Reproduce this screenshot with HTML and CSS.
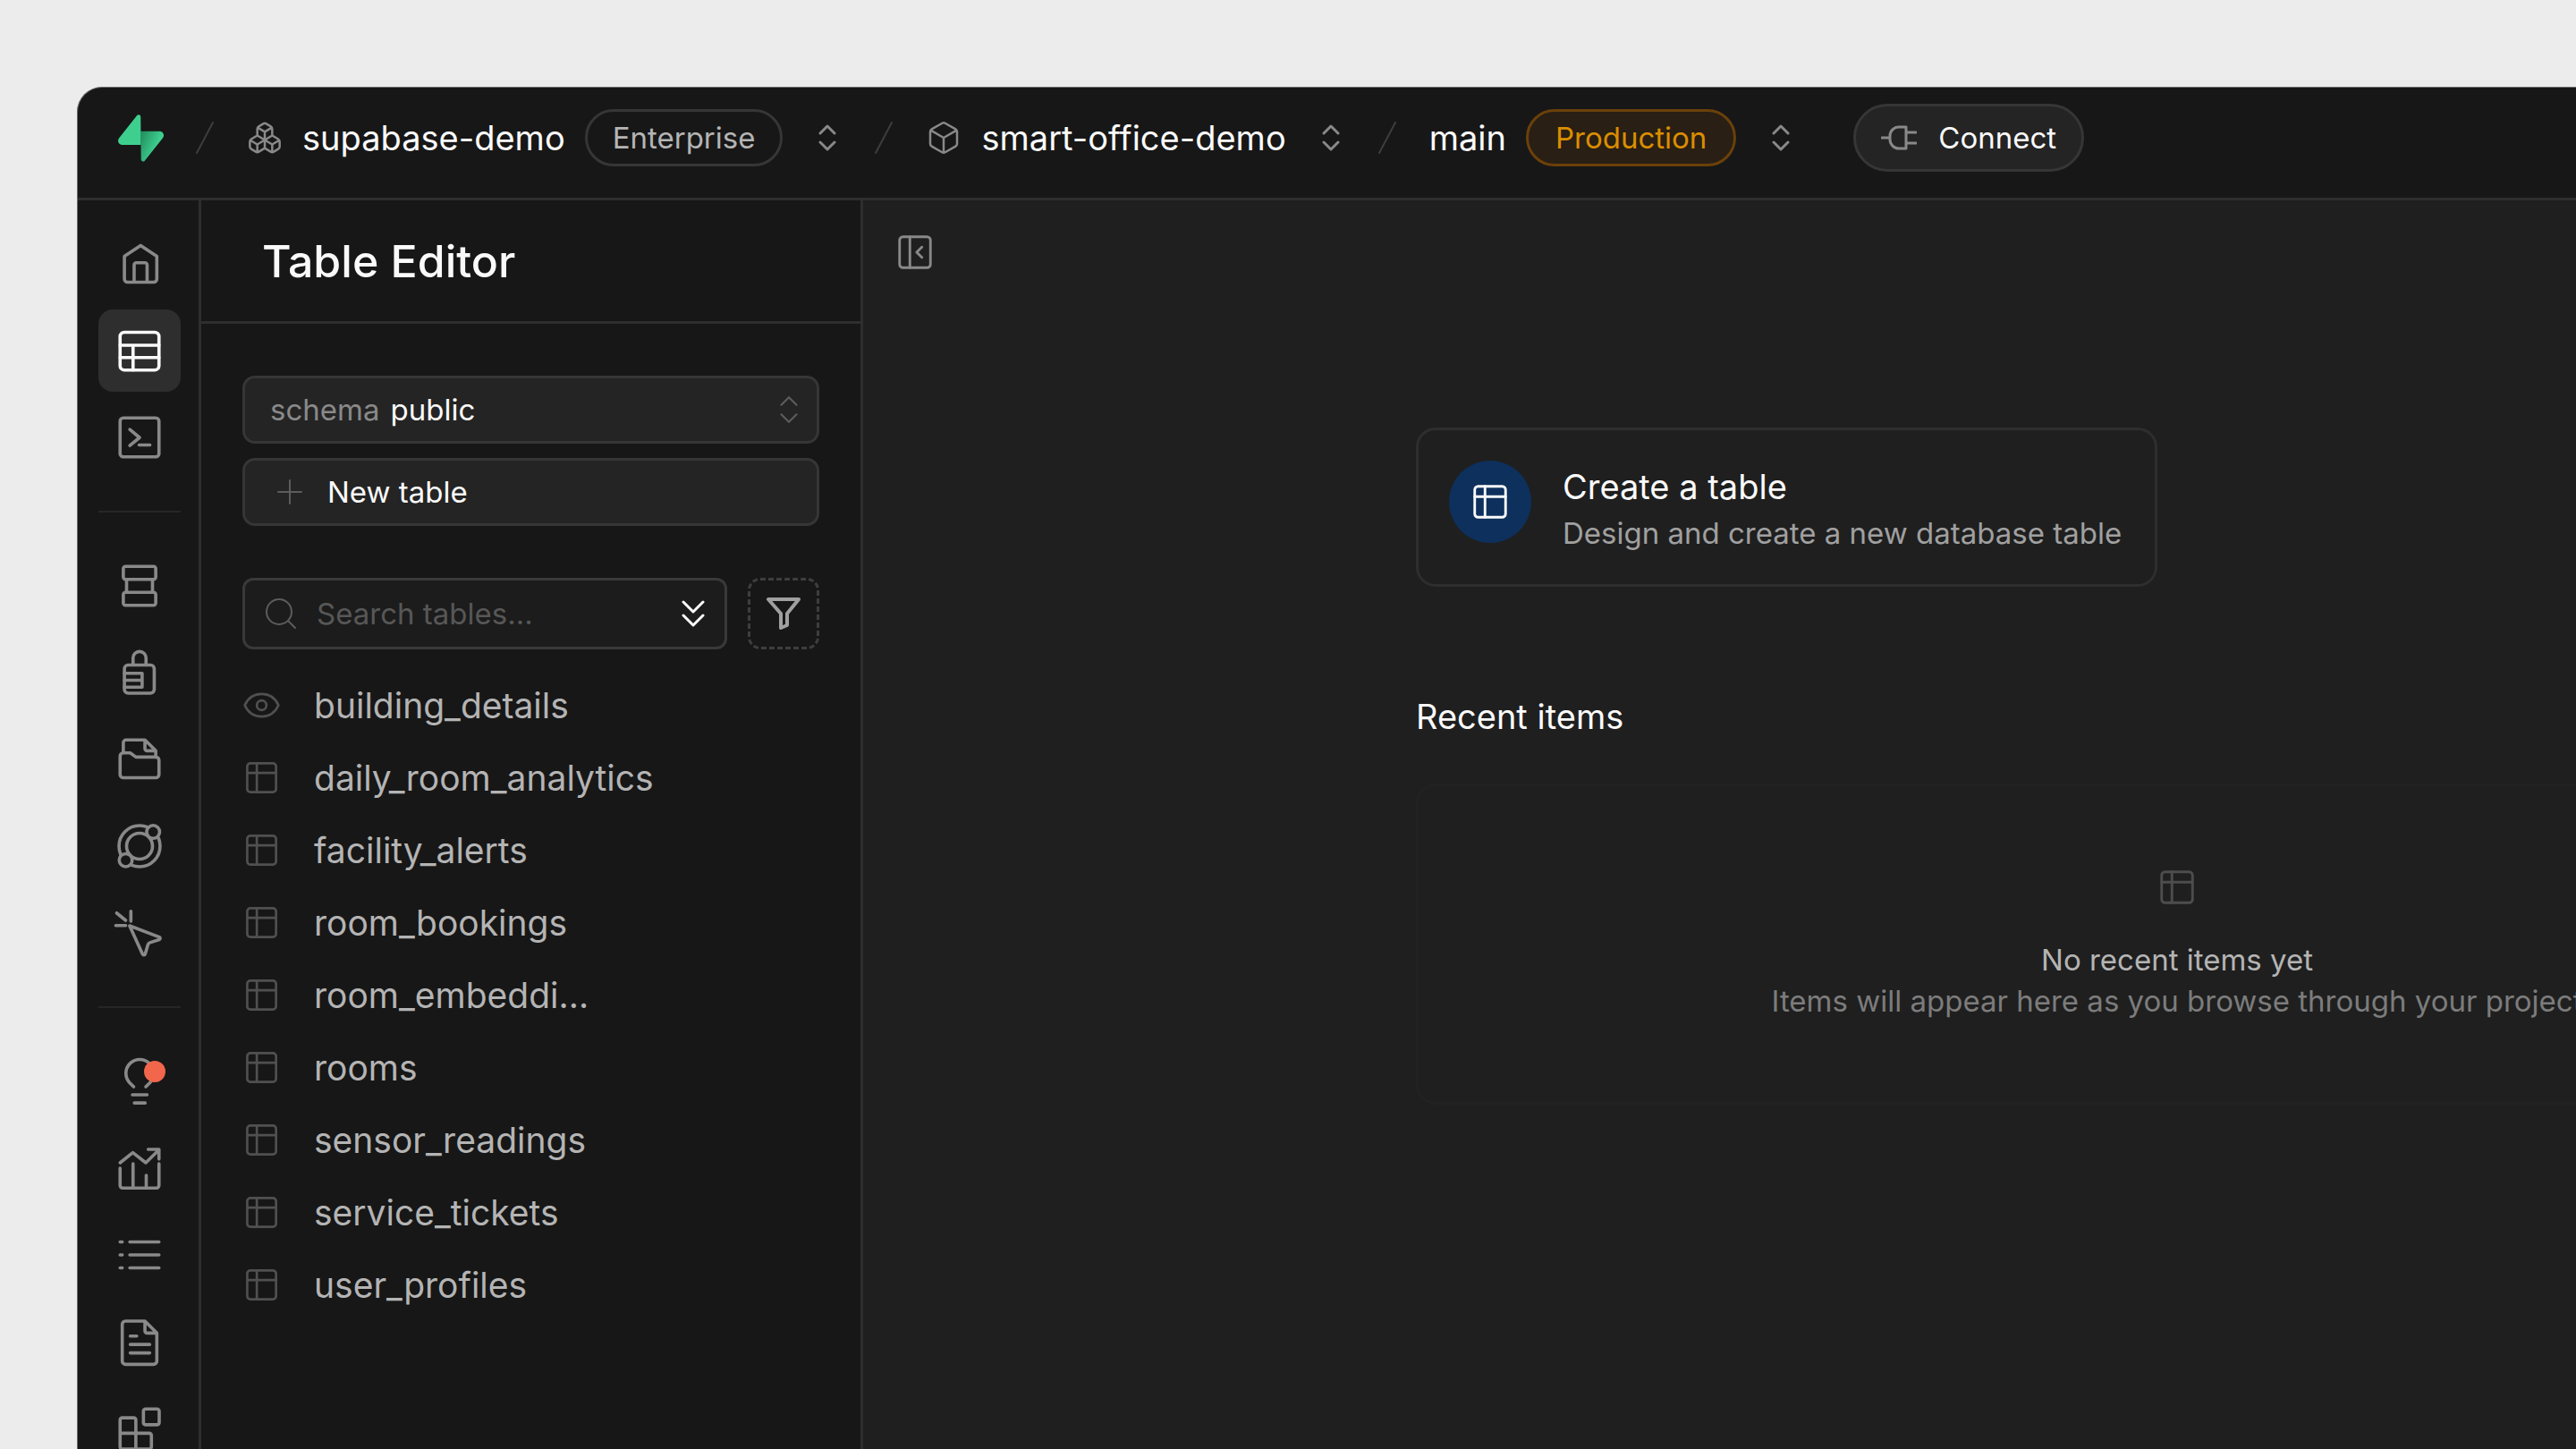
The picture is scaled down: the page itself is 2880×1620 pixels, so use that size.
FILE: index.html
```html
<!DOCTYPE html>
<html lang="en">
<head>
    <meta charset="utf-8">
    <title>Table Editor | Supabase</title>
    <link rel="stylesheet" href="styles.css">
</head>
<body>
    <!-- Icon sprite -->
    <svg class="sprite" aria-hidden="true">
        <symbol id="i-updown" viewBox="0 0 20 30"><path d="M2 10l8-8 8 8M2 20l8 8 8-8"/></symbol>
        <symbol id="i-slash" viewBox="0 0 20 36"><path d="M19 1L1 35"/></symbol>
        <symbol id="i-table" viewBox="0 0 24 24"><rect x="3" y="3" width="18" height="18" rx="2"/><path d="M3 9h18M9 3v18"/></symbol>
        <symbol id="i-box" viewBox="0 0 24 24"><path d="M21 8a2 2 0 0 0-1-1.73l-7-4a2 2 0 0 0-2 0l-7 4A2 2 0 0 0 3 8v8a2 2 0 0 0 1 1.73l7 4a2 2 0 0 0 2 0l7-4A2 2 0 0 0 21 16ZM3.3 7l8.7 5 8.7-5M12 22V12"/></symbol>
        <symbol id="i-boxes" viewBox="0 0 24 24"><path d="M2.97 12.92A2 2 0 0 0 2 14.63v3.24a2 2 0 0 0 .97 1.71l3 1.8a2 2 0 0 0 2.06 0L12 19v-5.5l-5-3-4.03 2.42ZM7 16.5l-4.74-2.85M7 16.5l5-3M7 16.5v5.17M12 13.5V19l3.97 2.38a2 2 0 0 0 2.06 0l3-1.8a2 2 0 0 0 .97-1.71v-3.24a2 2 0 0 0-.97-1.71L17 10.5l-5 3ZM17 16.5l-5-3M17 16.5l4.74-2.85M17 16.5v5.17M7.97 4.42A2 2 0 0 0 7 6.13v4.37l5 3 5-3V6.13a2 2 0 0 0-.97-1.71l-3-1.8a2 2 0 0 0-2.06 0l-3 1.8ZM12 8L7.26 5.15M12 8l4.74-2.85M12 13.5V8"/></symbol>
    </svg>

    <div class="app">
        <header class="topbar">
            <a class="logo" href="#" aria-label="Supabase">
                <svg viewBox="0 0 109 113">
                    <defs>
                        <linearGradient id="bolt" x1="54" y1="55" x2="94" y2="72" gradientUnits="userSpaceOnUse">
                            <stop stop-color="#249361"/>
                            <stop offset="1" stop-color="#3ecf8e"/>
                        </linearGradient>
                    </defs>
                    <path fill="url(#bolt)" d="M63.7 110.3c-2.9 3.6-8.7 1.6-8.7-3L54 40h45.2c8.2 0 12.8 9.5 7.7 15.9L63.7 110.3Z"/>
                    <path fill="#3ecf8e" d="M45.3 2.1c2.9-3.6 8.7-1.7 8.7 3l.5 67.2H9.8c-8.2 0-12.7-9.5-7.6-15.9L45.3 2.1Z"/>
                </svg>
            </a>
            <svg class="slash"><use href="#i-slash"/></svg>
            <div class="crumb">
                <svg class="crumb-icon"><use href="#i-boxes"/></svg>
                <a href="#">supabase-demo</a>
                <span class="badge">Enterprise</span>
                <button class="switch" aria-label="Switch organization"><svg><use href="#i-updown"/></svg></button>
            </div>
            <svg class="slash"><use href="#i-slash"/></svg>
            <div class="crumb">
                <svg class="crumb-icon"><use href="#i-box"/></svg>
                <a href="#">smart-office-demo</a>
                <button class="switch" aria-label="Switch project"><svg><use href="#i-updown"/></svg></button>
            </div>
            <svg class="slash"><use href="#i-slash"/></svg>
            <div class="crumb">
                <a href="#">main</a>
                <span class="badge badge-warning">Production</span>
                <button class="switch" aria-label="Switch branch"><svg><use href="#i-updown"/></svg></button>
            </div>
            <button class="connect">
                <svg viewBox="0 0 40 28"><path d="M1 14h9M28 8h11M28 20h11M28 2v24h-8a10 10 0 0 1-10-10v-4A10 10 0 0 1 20 2Z"/></svg>
                Connect
            </button>
        </header>

        <div class="body">
            <nav class="rail">
                <a href="#" aria-label="Home"><svg viewBox="0 0 24 24"><path d="M5 8.5l7.500-5 7.500 5v10.500a1.500 1.500 0 0 1-1.500 1.500h-12A1.500 1.500 0 0 1 5 19ZM9.500 20.500v-8a1 1 0 0 1 1-1h4a1 1 0 0 1 1 1v8"/></svg></a>
                <a href="#" class="active" aria-label="Table Editor"><svg viewBox="0 0 24 24"><rect x="3" y="3.500" width="18" height="17.500" rx="2"/><path d="M3 9.500h18M3 15.200h18M9 9.500V21"/></svg></a>
                <a href="#" aria-label="SQL Editor"><svg viewBox="0 0 24 24"><rect x="3" y="3" width="18" height="18" rx="1.500"/><path d="M7.500 8.300l4.500 3.800-4.500 3.700M11.800 15.500h5"/></svg></a>
                <hr>
                <a href="#" aria-label="Database"><svg viewBox="0 0 24 24"><rect x="4.500" y="3" width="15" height="6" rx="1"/><rect x="4.500" y="15" width="15" height="6" rx="1"/><path d="M6 9v6M18 9v6"/></svg></a>
                <a href="#" aria-label="Authentication"><svg viewBox="0 0 24 24"><rect x="5" y="8.500" width="13.800" height="13" rx="1.700"/><path d="M9 8.500V5.200a3 3 0 0 1 6 0v3.300M5 12.300h8.200v6.400H5M5 15.500h8"/></svg></a>
                <a href="#" aria-label="Storage"><svg viewBox="0 0 24 24"><path d="M4.500 9V4.300A1.300 1.300 0 0 1 5.800 3h8.700l5 5v2.500M14.500 3v4a1 1 0 0 0 1 1h4M3 10.500A1.500 1.500 0 0 1 4.500 9h3.200l2.600 1.900h9.200A1.500 1.500 0 0 1 21 12.400v6.600a1.500 1.500 0 0 1-1.500 1.500h-15A1.500 1.500 0 0 1 3 19Z"/></svg></a>
                <a href="#" aria-label="Edge Functions"><svg viewBox="0 0 24 24"><circle cx="12" cy="12" r="9.500"/><circle cx="12" cy="12" r="6"/><circle class="knob" cx="18.300" cy="5.400" r="3"/><circle class="knob" cx="5.600" cy="18.500" r="3"/></svg></a>
                <a href="#" aria-label="Realtime"><svg viewBox="0 0 24 24"><path d="M1.400 2.800l4.200 3.400M1 8.600h4.600M8 2v4.600M7.400 8.700l6 13.100c.3.600 1 .6 1.200 0l1.300-4.400a1.500 1.500 0 0 1 .9-.9l4.300-1.400c.6-.2.6-1 0-1.200Z"/></svg></a>
                <hr>
                <a href="#" aria-label="Advisors"><svg viewBox="0 0 24 24"><path d="M9.300 14.500l-1.900-1.900a6.400 6.400 0 1 1 9.400 0l-1.900 1.900M8.700 18.200h6.800M9.600 22h5"/></svg><span class="dot"></span></a>
                <a href="#" aria-label="Reports"><svg viewBox="0 0 24 24"><path d="M3 9.500l5.900-4.700 6 4.700L21 3.500M16 3.300h5v4.500M3 12v8a1.200 1.200 0 0 0 1.200 1.200h15.600A1.200 1.200 0 0 0 21 20V10M9 10v11M15.100 15.300V21"/></svg></a>
                <a href="#" aria-label="Logs"><svg viewBox="0 0 24 24"><path d="M3 6h1M3 12h1M3 18h1M7.500 6H21M7.500 12H21M7.500 18H21"/></svg></a>
                <a href="#" aria-label="API Docs"><svg viewBox="0 0 24 24"><path d="M14.500 2.500h-9A1.500 1.500 0 0 0 4 4v17a1.500 1.500 0 0 0 1.500 1.500h13A1.500 1.500 0 0 0 20 21V8ZM14.500 2.500V7a1 1 0 0 0 1 1H20M7.700 9.400h3M7.700 13.300h9M7.700 17.200h9"/></svg></a>
                <a href="#" aria-label="Integrations"><svg viewBox="0 0 24 24"><rect x="13.800" y="3" width="7.300" height="7.300" rx="1"/><path d="M10.300 21.500V8.100a1 1 0 0 0-1-1H4a1 1 0 0 0-1 1v12.400a1 1 0 0 0 1 1h12.500a1 1 0 0 0 1-1v-5.300a1 1 0 0 0-1-1H3"/></svg></a>
            </nav>

            <aside class="sidebar">
                <h1>Table Editor</h1>
                <div class="controls">
                    <button class="field">
                        <span class="muted">schema</span> public
                        <svg class="updown"><use href="#i-updown"/></svg>
                    </button>
                    <button class="field new-table">
                        <svg class="plus" viewBox="0 0 28 28"><path d="M14 1v26M1 14h26"/></svg>
                        New table
                    </button>
                </div>
                <div class="search-row">
                    <label class="search">
                        <svg class="search-icon" viewBox="0 0 36 36"><circle cx="16" cy="16" r="14"/><path d="M26 26l8 8"/></svg>
                        <input type="text" placeholder="Search tables..." aria-label="Search tables">
                        <svg class="sort" viewBox="0 0 26 32"><path d="M2 3l11 11L24 3M2 18l11 11 11-11"/></svg>
                    </label>
                    <button class="filter" aria-label="Filter">
                        <svg viewBox="0 0 38 36"><path d="M2 2h34L23 18v13l-7 3V18Z"/></svg>
                    </button>
                </div>
                <ul class="tables">
                    <li><a href="#"><svg viewBox="0 0 24 24"><path d="M1.500 12C3.500 7.500 7.500 5 12 5s8.500 2.500 10.500 7c-2 4.500-6 7-10.500 7S3.500 16.500 1.500 12Z"/><circle cx="12" cy="12" r="3"/></svg><span>building_details</span></a></li>
                    <li><a href="#"><svg><use href="#i-table"/></svg><span>daily_room_analytics</span></a></li>
                    <li><a href="#"><svg><use href="#i-table"/></svg><span>facility_alerts</span></a></li>
                    <li><a href="#"><svg><use href="#i-table"/></svg><span>room_bookings</span></a></li>
                    <li><a href="#"><svg><use href="#i-table"/></svg><span>room_embeddi…</span></a></li>
                    <li><a href="#"><svg><use href="#i-table"/></svg><span>rooms</span></a></li>
                    <li><a href="#"><svg><use href="#i-table"/></svg><span>sensor_readings</span></a></li>
                    <li><a href="#"><svg><use href="#i-table"/></svg><span>service_tickets</span></a></li>
                    <li><a href="#"><svg><use href="#i-table"/></svg><span>user_profiles</span></a></li>
                </ul>
            </aside>

            <main class="main">
                <button class="collapse" aria-label="Collapse sidebar">
                    <svg viewBox="0 0 24 24"><rect x="3" y="3" width="18" height="18" rx="2"/><path d="M9 3v18M16 15l-3-3 3-3"/></svg>
                </button>
                <div class="content">
                    <button class="card">
                        <span class="card-icon"><svg><use href="#i-table"/></svg></span>
                        <span class="card-text">
                            <strong>Create a table</strong>
                            <span>Design and create a new database table</span>
                        </span>
                    </button>
                    <h2>Recent items</h2>
                    <div class="recent">
                        <svg><use href="#i-table"/></svg>
                        <p class="recent-title">No recent items yet</p>
                        <p>Items will appear here as you browse through your project</p>
                    </div>
                </div>
            </main>
        </div>
    </div>
</body>
</html>
```
FILE: styles.css
```css
* {
    box-sizing: border-box;
}

body {
    margin: 0;
    height: 100vh;
    padding: 97px 0 0 86px;
    overflow: hidden;
    background: #ececec;
    color: #fafafa;
    font-family: Inter, "Liberation Sans", sans-serif;
    font-size: 33px;
}

svg {
    display: block;
    flex: none;
    fill: none;
    stroke: currentColor;
    stroke-linecap: round;
    stroke-linejoin: round;
}

a {
    color: inherit;
    text-decoration: none;
}

button, input {
    font: inherit;
    color: inherit;
    background: none;
    border: none;
    padding: 0;
    margin: 0;
}

button {
    display: flex;
    align-items: center;
    cursor: pointer;
}

.sprite {
    position: absolute;
    width: 0;
    height: 0;
}

.app {
    height: 100%;
    display: flex;
    flex-direction: column;
    overflow: hidden;
    background: #171717;
    border: 1px solid #6b6b6b;
    border-width: 1px 0 0 1px;
    border-top-left-radius: 28px;
}

/* Top bar */
.topbar {
    display: flex;
    align-items: center;
    gap: 25px;
    flex: none;
    height: 126px;
    padding: 0 45px 11px;
    border-bottom: 3px solid #2e2e2e;
    font-size: 38px;
}

.logo {
    margin-right: 11px;
}

.logo svg {
    width: 51px;
    height: 53px;
    stroke: none;
}

.slash {
    width: 20px;
    height: 36px;
    margin-right: 12px;
    color: #3d3d3d;
    stroke-width: 2;
}

.crumb {
    display: flex;
    align-items: center;
    gap: 22px;
}

.crumb-icon {
    width: 40px;
    height: 40px;
    color: #898989;
    stroke-width: 1.5;
}

.badge {
    display: flex;
    align-items: center;
    height: 64px;
    padding: 0 28px;
    border: 3px solid #363636;
    border-radius: 32px;
    color: #b4b4b4;
    font-size: 33px;
}

.badge-warning {
    padding: 0 30px;
    color: #db8e00;
    background: #291f14;
    border-color: #6b400a;
}

.switch {
    padding: 0 18px;
    color: #898989;
}

.switch svg {
    width: 20px;
    height: 30px;
    stroke-width: 3;
}

.connect {
    height: 76px;
    margin-left: 28px;
    padding: 0 28px;
    gap: 24px;
    background: #242424;
    border: 3px solid #363636;
    border-radius: 38px;
    font-size: 33px;
}

.connect svg {
    width: 40px;
    height: 28px;
    color: #898989;
    stroke-width: 3;
}

.body {
    display: flex;
    flex: 1;
    min-height: 0;
}

/* Icon rail */
.rail {
    flex: none;
    width: 138px;
    display: flex;
    flex-direction: column;
    align-items: center;
    gap: 5px;
    padding: 25px 0 0 2px;
    border-right: 3px solid #2e2e2e;
    color: #898989;
    overflow: hidden;
}

.rail a {
    position: relative;
    flex: none;
    display: flex;
    align-items: center;
    justify-content: center;
    width: 92px;
    height: 92px;
    border-radius: 16px;
}

.rail svg {
    width: 58px;
    height: 58px;
    stroke-width: 1.5;
}

.rail .active {
    background: #2e2e2e;
    color: #fafafa;
}

.rail hr {
    flex: none;
    width: 92px;
    height: 2px;
    margin: 31px 0;
    border: none;
    background: #262626;
}

.knob {
    fill: #171717;
}

.dot {
    position: absolute;
    top: 23px;
    right: 17px;
    width: 24px;
    height: 24px;
    border-radius: 50%;
    background: #f2664b;
}

/* Sidebar */
.sidebar {
    flex: none;
    width: 740px;
    border-right: 3px solid #2e2e2e;
}

.sidebar h1 {
    margin: 0;
    height: 138px;
    padding-left: 68px;
    border-bottom: 3px solid #2e2e2e;
    font-size: 50px;
    font-weight: 500;
    line-height: 136px;
}

.controls {
    display: flex;
    flex-direction: column;
    gap: 16px;
    padding: 58px 46px;
}

.field {
    height: 76px;
    padding: 0 20px 0 28px;
    gap: 12px;
    background: #242424;
    border: 3px solid #363636;
    border-radius: 14px;
}

.muted {
    color: #898989;
}

.updown {
    width: 22px;
    height: 32px;
    margin-left: auto;
    color: #5c5c5c;
    stroke-width: 2;
}

.new-table {
    gap: 28px;
    padding-left: 36px;
}

.plus {
    width: 28px;
    height: 28px;
    color: #5c5c5c;
    stroke-width: 2;
}

.search-row {
    display: flex;
    gap: 23px;
    padding: 0 46px;
}

.search {
    flex: 1;
    min-width: 0;
    display: flex;
    align-items: center;
    height: 80px;
    padding: 0 22px;
    border: 3px solid #393939;
    border-radius: 12px;
    background: #1c1c1c;
}

.search input {
    flex: 1;
    min-width: 0;
    margin: 0 22px;
    outline: none;
}

.search input::placeholder {
    color: #575757;
    opacity: 1;
}

.search-icon {
    width: 36px;
    height: 36px;
    color: #5c5c5c;
    stroke-width: 2;
}

.sort {
    width: 26px;
    height: 32px;
    stroke-width: 3;
}

.filter {
    justify-content: center;
    width: 80px;
    height: 80px;
    border: 3px dashed #3e3e3e;
    border-radius: 14px;
    color: #a0a0a0;
}

.filter svg {
    width: 38px;
    height: 36px;
    stroke-width: 4;
}

.tables {
    list-style: none;
    margin: 0;
    padding: 22px 46px;
    color: #b4b4b4;
    font-size: 39px;
}

.tables a {
    display: flex;
    align-items: center;
    gap: 37px;
    height: 81px;
}

.tables svg {
    width: 43px;
    height: 43px;
    color: #505050;
    stroke-width: 1.5;
}

/* Main area, runs off the right edge */
.main {
    flex: 1;
    min-width: 0;
    background: #1f1f1f;
    overflow: hidden;
}

.collapse {
    margin: 35px 0 0 35px;
    color: #898989;
}

.collapse svg {
    width: 46px;
    height: 46px;
    stroke-width: 1.5;
}

.content {
    padding: 173px 0 0 618px;
}

.card {
    align-items: flex-start;
    gap: 35px;
    width: 829px;
    height: 178px;
    padding: 34px;
    border: 3px solid #2e2e2e;
    border-radius: 22px;
    text-align: left;
}

.card-icon {
    flex: none;
    display: flex;
    align-items: center;
    justify-content: center;
    width: 92px;
    height: 92px;
    border-radius: 50%;
    background: #0e305c;
}

.card-icon svg {
    width: 46px;
    height: 46px;
    stroke-width: 1.5;
}

.card-text {
    display: flex;
    flex-direction: column;
    gap: 2px;
    padding-top: 4px;
    color: #a0a0a0;
    line-height: 50px;
    white-space: nowrap;
}

.card-text strong {
    color: #fafafa;
    font-size: 38px;
    font-weight: 400;
}

.content h2 {
    margin: 120px 0 50px;
    font-size: 38px;
    font-weight: 400;
    line-height: 50px;
}

.recent {
    display: flex;
    flex-direction: column;
    align-items: center;
    width: 1702px;
    height: 359px;
    padding-top: 90px;
    border: 3px solid #222;
    border-radius: 22px;
    color: #7c7c7c;
}

.recent svg {
    width: 46px;
    height: 46px;
    color: #4d4d4d;
    stroke-width: 1.5;
}

.recent p {
    margin: 0;
    line-height: 46px;
    white-space: nowrap;
}

.recent .recent-title {
    margin-top: 35px;
    color: #b4b4b4;
}
```
